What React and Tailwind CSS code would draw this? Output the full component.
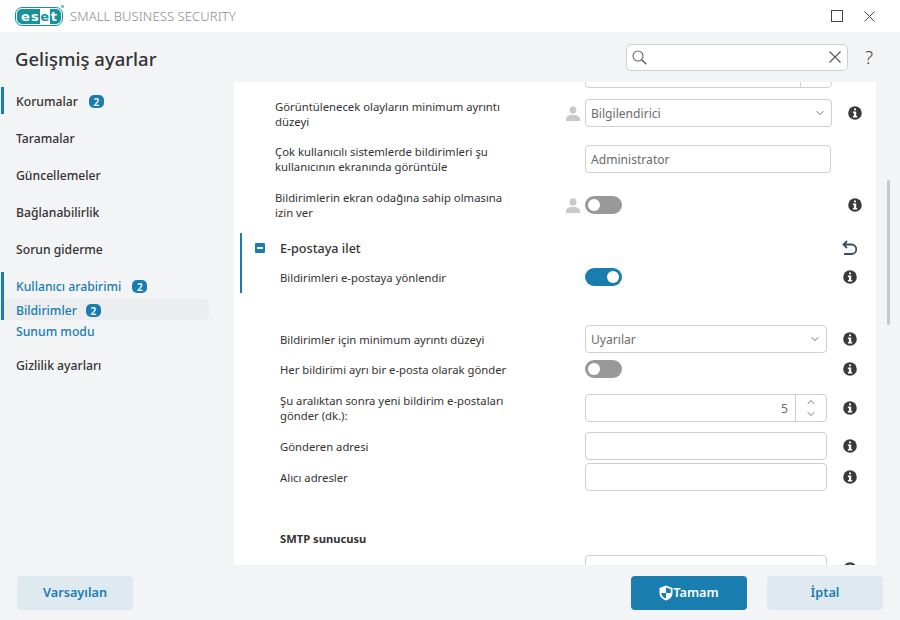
import { ChevronDown, ChevronUp } from 'lucide-react';

const Badge = ({ n }) => (
  <span className="inline-flex items-center justify-center w-[15px] h-[13px] rounded-[5px] bg-[#1a7db0] text-white text-[10px] font-semibold leading-none">
    {n}
  </span>
);

const Info = () => (
  <svg viewBox="0 0 14 14" className="w-[14px] h-[14px] shrink-0">
    <circle cx="7" cy="7" r="6.8" fill="#3a3a3a" />
    <path d="M6 2.4h2v1.9H6zM4.9 5.4h3.300v4.500h1v1.600H4.900V9.900h1V7H4.900z" fill="#fff" />
  </svg>
);

const Person = () => (
  <svg viewBox="0 0 16 15" className="w-[16px] h-[15px] shrink-0">
    <ellipse cx="8" cy="4" rx="3.400" ry="3.800" fill="#c9c9c9" />
    <path d="M1 15v-2.400c0-2 2.800-3.300 4.600-3.600h4.800c1.800.3 4.600 1.600 4.600 3.600V15z" fill="#c9c9c9" />
  </svg>
);

const Toggle = ({ on }) => (
  <div className={`w-[37px] h-[18px] rounded-full flex items-center px-[3px] ${on ? 'bg-[#1a7db0] justify-end' : 'bg-[#999999] justify-start'}`}>
    <div className="w-[12px] h-[12px] rounded-full bg-white" />
  </div>
);

const Field = ({ w = 'w-[242px]', children }) => (
  <div className={`${w} h-[28px] border border-[#cfcfcf] rounded-[4px] bg-white flex items-center pl-[5px] pt-[2px] text-[12.1px] text-[#6b6b6b]`}>
    {children}
  </div>
);

const Select = ({ w, value }) => (
  <Field w={w}>
    <span className="flex-1">{value}</span>
    <ChevronDown className="w-[12px] h-[12px] mr-[5px] mb-[3px] text-[#444]" strokeWidth={1.5} />
  </Field>
);

// upper block, labels start further left than in the section below
const TopRow = ({ label, h, person, control, info = true, pad = 'pt-[1px]' }) => (
  <div className={`flex items-center ${h}`}>
    <div className={`w-[230px] ml-[41px] ${pad} text-[11.3px] leading-[15px] text-[#333]`}>{label}</div>
    <div className="w-[16px] ml-[60px] mr-[4px] flex justify-center">{person && <Person />}</div>
    <div className="w-[263px] flex">{control}</div>
    {info && <Info />}
  </div>
);

const Row = ({ label, h, control, info = true, pad = 'pt-[1px]' }) => (
  <div className={`flex items-center ${h}`}>
    <div className={`w-[230px] ml-[46px] mr-[75px] ${pad} text-[11.3px] leading-[15px] text-[#333]`}>{label}</div>
    <div className="w-[258px] flex">{control}</div>
    {info && <Info />}
  </div>
);

const NavItem = ({ label, badge, blue, active, bar, className = '' }) => (
  <div className={`flex items-center ${className}`}>
    <div className={`w-[3px] self-stretch ml-[1px] ${bar ? 'bg-[#1a7db0]' : ''}`} />
    <div className={`flex items-center w-[205px] h-full pl-[12px] pt-[2px] rounded-r-[5px] text-[12.2px] font-medium ${blue ? 'text-[#1a7db0]' : 'text-[#333]'} ${active ? 'bg-[#ecedef] gap-[9px]' : 'gap-[11px]'}`}>
      <span className="pt-[2px]">{label}</span>
      {badge && <Badge n={badge} />}
    </div>
  </div>
);

const FooterButton = ({ primary, children }) => (
  <button className={`w-[116px] h-[34px] rounded-[4px] flex items-center justify-center text-[12.7px] font-semibold ${primary ? 'bg-[#1a7db0] text-white' : 'bg-[#dee9f0] text-[#1a7db0]'}`}>
    {children}
  </button>
);

export default function App() {
  return (
    <div className="w-[900px] h-[620px] flex flex-col overflow-hidden bg-[#f3f4f6] font-['Noto_Sans',sans-serif]">
      {/* title bar */}
      <div className="h-[32px] bg-white flex items-center pl-[15px] shrink-0">
        <div className="relative w-[48px] h-[19px] rounded-[7px] border border-[#14949a] p-[1px]">
          <div className="w-full h-full rounded-[5px] bg-[#14949a] flex items-center justify-center gap-[1px] text-white text-[13px] font-bold leading-none font-['DejaVu_Sans',sans-serif]">
            <span>e</span>
            <span>s</span>
            <span className="w-[10px] h-full flex items-center justify-center bg-white text-[#14949a]">e</span>
            <span>t</span>
          </div>
          <span className="absolute -top-[3px] -right-[2px] w-[3px] h-[3px] rounded-full border border-[#14949a] bg-white" />
        </div>
        <span className="ml-[7px] pt-[1px] text-[13px] font-light text-[#8a8a8a] tracking-[0.1px]">SMALL BUSINESS SECURITY</span>
        <div className="ml-auto flex items-center gap-[21px] pr-[25px]">
          <div className="w-[12px] h-[12px] border border-[#444]" />
          <svg viewBox="0 0 11 11" className="w-[11px] h-[11px]">
            <path d="M.5.5l10 10M10.500.5l-10 10" stroke="#444" strokeWidth="1" fill="none" />
          </svg>
        </div>
      </div>

      {/* header */}
      <div className="h-[50px] flex items-center pl-[15px] shrink-0">
        <h1 className="pt-[3px] text-[18.5px] font-medium text-[#333]">Gelişmiş ayarlar</h1>
        <div className="ml-auto w-[222px] h-[27px] bg-white border border-[#cfcfcf] rounded-[5px] flex items-center justify-between pl-[5px] pr-[6px]">
          <svg viewBox="0 0 15 15" className="w-[15px] h-[15px]">
            <circle cx="6" cy="6" r="5" stroke="#666" strokeWidth="1.100" fill="none" />
            <path d="M9.700 9.700l4.600 4.600" stroke="#555" strokeWidth="1.300" fill="none" />
          </svg>
          <svg viewBox="0 0 12 12" className="w-[12px] h-[12px]">
            <path d="M.5.5l11 11M11.500.5l-11 11" stroke="#555" strokeWidth="1.100" fill="none" />
          </svg>
        </div>
        <span className="w-[52px] pl-[17px] text-[19px] font-light leading-none text-[#444]">?</span>
      </div>

      <div className="flex-1 flex min-h-0">
        {/* sidebar */}
        <div className="w-[234px] shrink-0 flex flex-col pt-[5px]">
          <NavItem label="Korumalar" badge="2" bar className="h-[27px] mb-[10px]" />
          <NavItem label="Taramalar" className="h-[27px] mb-[10px]" />
          <NavItem label="Güncellemeler" className="h-[27px] mb-[10px]" />
          <NavItem label="Bağlanabilirlik" className="h-[27px] mb-[10px]" />
          <NavItem label="Sorun giderme" className="h-[27px] mb-[10px]" />
          <NavItem label="Kullanıcı arabirimi" badge="2" blue bar className="h-[27px]" />
          <NavItem label="Bildirimler" badge="2" blue bar active className="h-[21px]" />
          <NavItem label="Sunum modu" blue className="h-[21px] mb-[13px]" />
          <NavItem label="Gizlilik ayarları" className="h-[21px]" />
        </div>

        {/* content */}
        <div className="w-[642px] h-[483px] bg-white overflow-hidden shrink-0">
          <div className="-mt-[22px]">
            <TopRow h="h-[28px]" control={
              <div className="w-[247px] h-[28px] border border-[#cfcfcf] rounded-[4px] flex justify-end">
                <div className="w-[31px] border-l border-[#cfcfcf]" />
              </div>
            } info={false} />
            <div className="mt-[11px]">
              <TopRow h="h-[28px]" label="Görüntülenecek olayların minimum ayrıntı düzeyi" person control={<Select w="w-[247px]" value="Bilgilendirici" />} />
            </div>
            <div className="mt-[18px]">
              <TopRow h="h-[28px]" pad="pb-[1px]" label="Çok kullanıcılı sistemlerde bildirimleri şu kullanıcının ekranında görüntüle" control={<Field w="w-[246px]">Administrator</Field>} info={false} />
            </div>
            <div className="mt-[23px]">
              <TopRow h="h-[18px]" pad="pb-[1px]" label="Bildirimlerin ekran odağına sahip olmasına izin ver" person control={<Toggle />} />
            </div>

            {/* E-postaya ilet */}
            <div className="mt-[19px] ml-[6px] border-l-2 border-[#1a7db0] h-[60px]">
              <div className="flex items-center w-[615px] h-[30px] pl-[13px]">
                <div className="w-[10px] h-[10px] rounded-[1px] bg-[#1a7db0] flex items-center justify-center">
                  <div className="w-[6px] h-[2px] bg-white" />
                </div>
                <span className="ml-[15px] pt-[2px] flex-1 text-[12.6px] font-medium text-[#333]">E-postaya ilet</span>
                <svg viewBox="0 0 15 16" className="w-[15px] h-[16px]">
                  <path d="M5 1 1.500 4.500 5 8M1.500 4.500h8a4.500 4.500 0 0 1 0 9.500H2" stroke="#37505f" strokeWidth="1.800" fill="none" />
                </svg>
              </div>
            </div>
            <div className="-mt-[25px]">
              <Row h="h-[18px]" label="Bildirimleri e-postaya yönlendir" control={<Toggle on />} />
            </div>

            <div className="mt-[39px]">
              <Row h="h-[28px]" label="Bildirimler için minimum ayrıntı düzeyi" control={<Select w="w-[242px]" value="Uyarılar" />} />
            </div>
            <div className="mt-[7px]">
              <Row h="h-[18px]" label="Her bildirimi ayrı bir e-posta olarak gönder" control={<Toggle />} />
            </div>
            <div className="mt-[16px]">
              <Row h="h-[28px]" pad="pb-[1px]" label="Şu aralıktan sonra yeni bildirim e-postaları gönder (dk.):" control={
                <div className="w-[242px] h-[28px] border border-[#cfcfcf] rounded-[4px] flex text-[12.1px] text-[#6b6b6b]">
                  <span className="flex-1 text-right pr-[7px] leading-[28px]">5</span>
                  <div className="w-[31px] border-l border-[#cfcfcf] flex flex-col items-center justify-center">
                    <ChevronUp className="w-[12px] h-[12px] text-[#444]" strokeWidth={1.5} />
                    <ChevronDown className="w-[12px] h-[12px] text-[#444]" strokeWidth={1.5} />
                  </div>
                </div>
              } />
            </div>
            <div className="mt-[10px]">
              <Row h="h-[28px]" label="Gönderen adresi" control={<Field />} />
            </div>
            <div className="mt-[3px]">
              <Row h="h-[28px]" label="Alıcı adresler" control={<Field />} />
            </div>
            <div className="mt-[40px] ml-[46px] h-[15px] text-[11.2px] leading-[15px] font-bold text-[#333]">SMTP sunucusu</div>
            <div className="mt-[9px]">
              <Row h="h-[28px]" control={<Field />} />
            </div>
          </div>
        </div>

        {/* scrollbar */}
        <div className="flex-1 relative">
          <div className="absolute left-[11px] top-[98px] w-[3px] h-[145px] rounded-full bg-[#c8c8c8]" />
        </div>
      </div>

      {/* footer */}
      <div className="h-[55px] shrink-0 flex items-center pl-[17px] pr-[17px] gap-[20px]">
        <FooterButton>Varsayılan</FooterButton>
        <div className="flex-1" />
        <FooterButton primary>
          <svg viewBox="0 0 14 16" className="w-[14px] h-[16px]">
            <path d="M7 .5 13.500 3v5c0 3.800-2.800 6.300-6.500 7.500C3.300 14.300.5 11.800.5 8V3z" fill="#fff" />
            <path d="M7 2.500 11.800 4.200V8H7zM7 8v5.600C4.500 12.600 2.400 10.700 2.200 8z" fill="#1a7db0" />
          </svg>
          Tamam
        </FooterButton>
        <FooterButton>İptal</FooterButton>
      </div>
    </div>
  );
}
